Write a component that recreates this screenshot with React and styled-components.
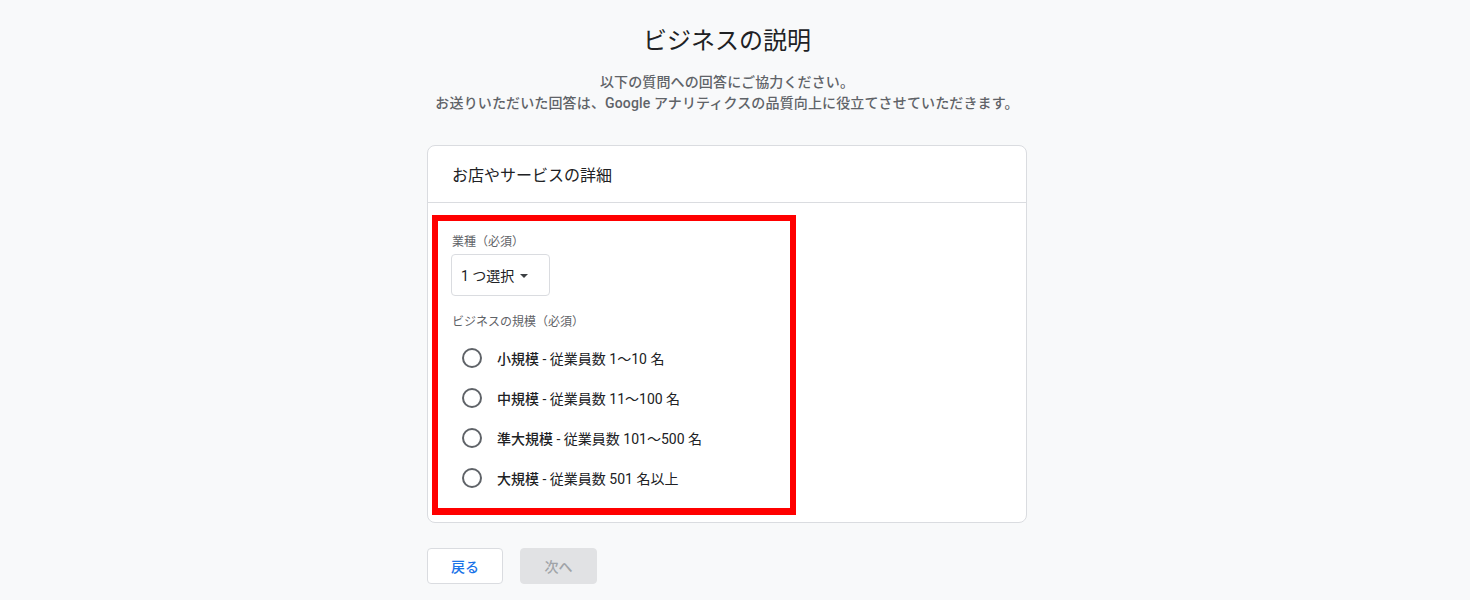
import React from 'react';
import styled, { createGlobalStyle } from 'styled-components';

const GlobalStyle = createGlobalStyle`
  body {
    margin: 0;
    background: #f8f9fa;
    font-family: Roboto, "Noto Sans CJK JP", "Noto Sans", sans-serif;
    color: #202124;
  }
`;

const Viewport = styled.div`
  padding-right: 16px;
`;

const Page = styled.div`
  width: 600px;
  margin: 0 auto;
  padding-top: 25px;
`;

const Title = styled.h1`
  margin: 0;
  font-size: 24px;
  line-height: 32px;
  font-weight: 400;
  text-align: center;
  color: #202124;
`;

const Intro = styled.p`
  margin: 15px -80px 0;
  font-size: 14px;
  line-height: 21px;
  font-weight: 500;
  letter-spacing: 0.01em;
  text-align: center;
  color: #5f6368;
`;

const Card = styled.section`
  margin-top: 31px;
  background: #fff;
  border: 1px solid #dadce0;
  border-radius: 8px;
`;

const CardHeader = styled.div`
  display: flex;
  align-items: center;
  height: 56px;
  padding: 0 24px;
  border-bottom: 1px solid #dadce0;
  font-size: 16px;
  color: #202124;
`;

const CardBody = styled.div`
  padding: 12px 0 7px 4px;
`;

const Highlight = styled.div`
  box-sizing: border-box;
  width: 364px;
  border: 6px solid #ff0000;
  border-bottom-width: 7px;
  padding: 13px 14px 10px;
`;

const FieldLabel = styled.div`
  font-size: 12px;
  line-height: 16px;
  color: #5f6368;
  margin-top: ${p => p.$gap || 0}px;
`;

const Select = styled.button`
  display: inline-flex;
  align-items: center;
  gap: 6px;
  box-sizing: border-box;
  height: 42px;
  margin-top: 4px;
  margin-left: -1px;
  padding: 0 21px 0 9px;
  background: #fff;
  border: 1px solid #dadce0;
  border-radius: 4px;
  font: inherit;
  font-size: 14px;
  color: #202124;
  cursor: pointer;
`;

const Caret = styled.span`
  width: 0;
  height: 0;
  border-left: 4px solid transparent;
  border-right: 4px solid transparent;
  border-top: 4px solid #3c4043;
  margin-top: 2px;
`;

const RadioList = styled.div`
  display: flex;
  flex-direction: column;
  margin-top: 8px;
`;

const RadioRow = styled.label`
  display: flex;
  align-items: center;
  height: 40px;
  padding-left: 10px;
  gap: 15px;
  font-size: 14px;
  color: #202124;
  cursor: pointer;
`;

const Circle = styled.span`
  box-sizing: border-box;
  width: 20px;
  height: 20px;
  border: 2px solid #5f6368;
  border-radius: 50%;
`;

const Size = styled.span`
  font-weight: 500;
`;

const Actions = styled.div`
  display: flex;
  gap: 17px;
  margin-top: 25px;
`;

const Button = styled.button`
  box-sizing: border-box;
  width: ${p => p.$w}px;
  height: 36px;
  border-radius: 4px;
  font: inherit;
  font-size: 14px;
  font-weight: 500;
  border: 1px solid ${p => (p.disabled ? '#e1e2e4' : '#dadce0')};
  background: ${p => (p.disabled ? '#e1e2e4' : '#fff')};
  color: ${p => (p.disabled ? '#a0a4a8' : '#1a73e8')};
`;

const sizes = [
  ['小規模', '従業員数 1〜10 名'],
  ['中規模', '従業員数 11〜100 名'],
  ['準大規模', '従業員数 101〜500 名'],
  ['大規模', '従業員数 501 名以上'],
];

export default function App() {
  return (
    <Viewport>
      <GlobalStyle />
      <Page>
        <Title>ビジネスの説明</Title>
        <Intro>
          以下の質問への回答にご協力ください。
          <br />
          お送りいただいた回答は、Google アナリティクスの品質向上に役立てさせていただきます。
        </Intro>
        <Card>
          <CardHeader>お店やサービスの詳細</CardHeader>
          <CardBody>
            <Highlight>
              <FieldLabel>業種（必須）</FieldLabel>
              <Select type="button">
                1 つ選択
                <Caret />
              </Select>
              <FieldLabel $gap={18}>ビジネスの規模（必須）</FieldLabel>
              <RadioList>
                {sizes.map(([name, detail]) => (
                  <RadioRow key={name}>
                    <Circle />
                    <span>
                      <Size>{name}</Size> - {detail}
                    </span>
                  </RadioRow>
                ))}
              </RadioList>
            </Highlight>
          </CardBody>
        </Card>
        <Actions>
          <Button type="button" $w={76}>戻る</Button>
          <Button type="button" $w={77} disabled>次へ</Button>
        </Actions>
      </Page>
    </Viewport>
  );
}
